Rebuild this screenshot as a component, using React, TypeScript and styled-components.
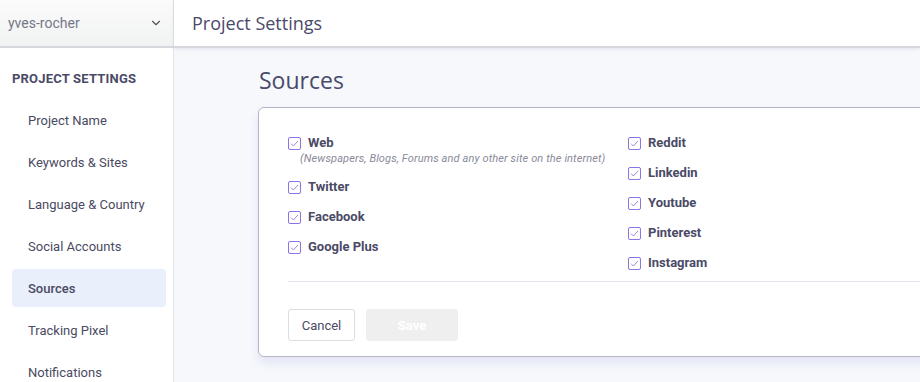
import React, { useState } from 'react';
import styled, { createGlobalStyle } from 'styled-components';
import { ChevronDown } from 'lucide-react';

const GlobalStyle = createGlobalStyle`
  html, body {
    margin: 0;
    padding: 0;
    width: 920px;
    height: 382px;
    overflow: hidden;
    background: #f6f8fc;
  }
  * { box-sizing: border-box; }
  body {
    font-family: Roboto, "Liberation Sans", sans-serif;
    color: #4a4a68;
  }
`;

const Shell = styled.div`
  display: grid;
  grid-template-columns: 174px 1fr;
  grid-template-rows: 48px 1fr;
  width: 920px;
  height: 382px;
`;

const ProjectPicker = styled.div`
  display: flex;
  align-items: center;
  justify-content: space-between;
  padding: 0 10px 0 8px;
  background: linear-gradient(#fafbfa, #f1f3f2);
  border-right: 1px solid #e3e4e8;
  border-bottom: 2px solid #d6d8de;
  font-size: 14px;
  color: #75768a;
`;

const TopBar = styled.div`
  display: flex;
  align-items: center;
  padding-left: 18px;
  background: #fff;
  border-bottom: 2px solid #d6d8de;
  box-shadow: 0 1px 4px rgba(80, 80, 120, 0.12);
  font-family: "Open Sans", "Noto Sans", sans-serif;
  font-size: 18px;
  color: #4a4a6a;
  z-index: 1;
`;

const Sidebar = styled.nav`
  background: #fff;
  border-right: 1px solid #e3e4e8;
  padding: 20px 7px 0 12px;
  display: flex;
  flex-direction: column;
  overflow: hidden;
`;

const SideHeading = styled.div`
  font-size: 13px;
  font-weight: 700;
  letter-spacing: 0.2px;
  color: #4a4a68;
  margin: 1px 0 12px;
  line-height: 20px;
`;

const NavItem = styled.div<{ $active?: boolean }>`
  flex-shrink: 0;
  height: 38px;
  margin-bottom: 4px;
  padding-left: 16px;
  display: flex;
  align-items: center;
  border-radius: 4px;
  font-size: 13px;
  font-weight: ${(p) => (p.$active ? 500 : 400)};
  color: #4a4a62;
  background: ${(p) => (p.$active ? '#e9effb' : 'transparent')};
`;

const Main = styled.main`
  padding: 17px 0 0 84px;
  overflow: hidden;
`;

const PageTitle = styled.h1`
  margin: 0 0 12px 1px;
  font-family: "Open Sans", "Noto Sans", sans-serif;
  font-weight: 400;
  font-size: 23px;
  line-height: 30px;
  color: #4a4a6a;
`;

const Card = styled.section`
  width: 720px;
  background: #fff;
  border: 1px solid #b7b5c9;
  border-radius: 6px;
  padding: 27px 0 15px 29px;
  box-shadow: 0 6px 10px rgba(120, 120, 190, 0.14);
`;

const Columns = styled.div`
  display: grid;
  grid-template-columns: 340px 1fr;
`;

const Column = styled.div`
  display: flex;
  flex-direction: column;
  gap: 14px;
`;

const Option = styled.label`
  display: flex;
  align-items: flex-start;
  gap: 7px;
  cursor: pointer;
`;

const Box = styled.span`
  width: 13px;
  height: 13px;
  margin-top: 2px;
  border: 1px solid #8c73e6;
  border-radius: 2px;
  display: flex;
  align-items: center;
  justify-content: center;
  flex-shrink: 0;
`;

const OptionText = styled.span`
  display: flex;
  flex-direction: column;
`;

const OptionLabel = styled.span`
  font-size: 13px;
  font-weight: 700;
  line-height: 16px;
  color: #4a4a66;
`;

const Hint = styled.span`
  margin: 1px 0 0 -8px;
  font-size: 11px;
  font-style: italic;
  letter-spacing: 0.12px;
  line-height: 13px;
  color: #8a8a9a;
  white-space: nowrap;
`;

const Divider = styled.hr`
  margin: 10px 0 27px;
  border: 0;
  border-top: 1px solid #e6e8f0;
`;

const Actions = styled.div`
  display: flex;
  gap: 11px;
`;

const Button = styled.button<{ $primary?: boolean }>`
  height: 32px;
  padding: 0;
  width: ${(p) => (p.$primary ? '92px' : '67px')};
  border-radius: 3px;
  font-family: Roboto, "Liberation Sans", sans-serif;
  font-size: 13px;
  font-weight: ${(p) => (p.$primary ? 700 : 400)};
  color: ${(p) => (p.$primary ? '#fff' : '#4a4a66')};
  background: ${(p) => (p.$primary ? '#efefef' : '#fff')};
  border: 1px solid ${(p) => (p.$primary ? '#efefef' : '#dcdde3')};
`;

const Check = () => (
  <svg width="9" height="7" viewBox="0 0 9 7" fill="none">
    <path d="M1 3.6 L3.4 6 L8 1" stroke="#9c86ea" strokeWidth="1" />
  </svg>
);

const navItems = [
  'Project Name',
  'Keywords & Sites',
  'Language & Country',
  'Social Accounts',
  'Sources',
  'Tracking Pixel',
  'Notifications',
];

const leftSources = [
  { name: 'Web', hint: '(Newspapers, Blogs, Forums and any other site on the internet)' },
  { name: 'Twitter' },
  { name: 'Facebook' },
  { name: 'Google Plus' },
];
const rightSources = [
  { name: 'Reddit' },
  { name: 'Linkedin' },
  { name: 'Youtube' },
  { name: 'Pinterest' },
  { name: 'Instagram' },
];

const SourceOption = ({ name, hint }: { name: string; hint?: string }) => (
  <Option>
    <Box>
      <Check />
    </Box>
    <OptionText>
      <OptionLabel>{name}</OptionLabel>
      {hint && <Hint>{hint}</Hint>}
    </OptionText>
  </Option>
);

export default function App() {
  const [active] = useState('Sources');
  return (
    <>
      <GlobalStyle />
      <Shell>
        <ProjectPicker>
          <span>yves-rocher</span>
          <ChevronDown size={14} strokeWidth={2} color="#555" />
        </ProjectPicker>
        <TopBar>Project Settings</TopBar>
        <Sidebar>
          <SideHeading>PROJECT SETTINGS</SideHeading>
          {navItems.map((item) => (
            <NavItem key={item} $active={item === active}>
              {item}
            </NavItem>
          ))}
        </Sidebar>
        <Main>
          <PageTitle>Sources</PageTitle>
          <Card>
            <Columns>
              <Column>
                {leftSources.map((s) => (
                  <SourceOption key={s.name} {...s} />
                ))}
              </Column>
              <Column>
                {rightSources.map((s) => (
                  <SourceOption key={s.name} {...s} />
                ))}
              </Column>
            </Columns>
            <Divider />
            <Actions>
              <Button>Cancel</Button>
              <Button $primary disabled>
                Save
              </Button>
            </Actions>
          </Card>
        </Main>
      </Shell>
    </>
  );
}
